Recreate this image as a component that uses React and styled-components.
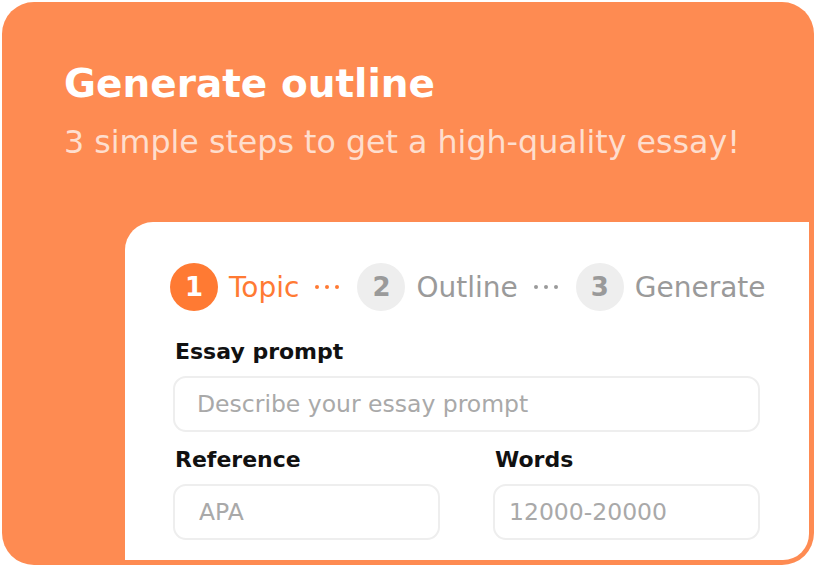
import React from "react";
import styled, { createGlobalStyle } from "styled-components";

const Global = createGlobalStyle`
  html, body {
    margin: 0;
    padding: 0;
    background: #ffffff;
  }
  body {
    font-family: "DejaVu Sans", "Noto Sans", sans-serif;
  }
`;

const Page = styled.div`
  width: 816px;
  height: 568px;
  padding: 2px 2px 3px 2px;
  box-sizing: border-box;
`;

const Card = styled.div`
  height: 100%;
  background: #fe8b52;
  border-radius: 32px;
  display: flex;
  flex-direction: column;
  overflow: hidden;
`;

const Header = styled.div`
  padding: 58px 0 0 62px;
`;

const Title = styled.h1`
  margin: 0;
  font-size: 39px;
  font-weight: 700;
  color: #ffffff;
  line-height: 48px;
`;

const Subtitle = styled.p`
  margin: 14px 0 0 0;
  font-size: 31.7px;
  font-weight: 400;
  color: rgba(255, 255, 255, 0.72);
  line-height: 40px;
`;

const Panel = styled.div`
  margin: auto 5px 5px auto;
  width: 684px;
  height: 338px;
  background: #ffffff;
  border-radius: 28px 0 26px 0;
  padding: 40px 49px 0 45px;
  box-sizing: border-box;
`;

const Steps = styled.div`
  display: flex;
  align-items: center;
  height: 50px;
`;

const Step = styled.div`
  display: flex;
  align-items: center;
  gap: 11px;
`;

const Circle = styled.div`
  width: 48px;
  height: 48px;
  border-radius: 50%;
  display: flex;
  align-items: center;
  justify-content: center;
  font-size: 26px;
  font-weight: 600;
  background: ${(p) => (p.active ? "#ff7a33" : "#eeeeee")};
  color: ${(p) => (p.active ? "#ffffff" : "#9a9a9a")};
`;

const StepLabel = styled.span`
  font-size: 28px;
  font-weight: 500;
  color: ${(p) => (p.active ? "#ff7a33" : "#9a9a9a")};
`;

const Dots = styled.div`
  display: flex;
  gap: 6px;
  margin: 0 18px 0 16px;
  span {
    width: 4px;
    height: 4px;
    border-radius: 50%;
    background: ${(p) => (p.active ? "#ff7a33" : "#9a9a9a")};
  }
`;

const Field = styled.div`
  display: flex;
  flex-direction: column;
`;

const Label = styled.label`
  font-size: 22px;
  font-weight: 700;
  color: #111111;
  line-height: 28px;
  margin: 0 0 10px 2px;
`;

const Input = styled.div`
  height: 56px;
  border: 2px solid #eeeeee;
  border-radius: 13px;
  box-sizing: border-box;
  display: flex;
  align-items: center;
  padding-left: ${(p) => p.pad || 22}px;
  font-size: 23.5px;
  color: #a9a9a9;
`;

const Row = styled.div`
  display: grid;
  grid-template-columns: 267px 267px;
  column-gap: 53px;
  margin: 14px 0 0 3px;
`;

const Top = styled.div`
  margin: 26px 0 0 3px;
`;

const Sep = ({ active }) => (
  <Dots active={active}>
    <span />
    <span />
    <span />
  </Dots>
);

export default function App() {
  return (
    <Page>
      <Global />
      <Card>
        <Header>
          <Title>Generate outline</Title>
          <Subtitle>3 simple steps to get a high-quality essay!</Subtitle>
        </Header>
        <Panel>
          <Steps>
            <Step>
              <Circle active>1</Circle>
              <StepLabel active>Topic</StepLabel>
            </Step>
            <Sep active />
            <Step>
              <Circle>2</Circle>
              <StepLabel>Outline</StepLabel>
            </Step>
            <Sep />
            <Step>
              <Circle>3</Circle>
              <StepLabel>Generate</StepLabel>
            </Step>
          </Steps>
          <Top>
            <Field>
              <Label>Essay prompt</Label>
              <Input>Describe your essay prompt</Input>
            </Field>
          </Top>
          <Row>
            <Field>
              <Label>Reference</Label>
              <Input pad={24}>APA</Input>
            </Field>
            <Field>
              <Label>Words</Label>
              <Input pad={14}>12000-20000</Input>
            </Field>
          </Row>
        </Panel>
      </Card>
    </Page>
  );
}
